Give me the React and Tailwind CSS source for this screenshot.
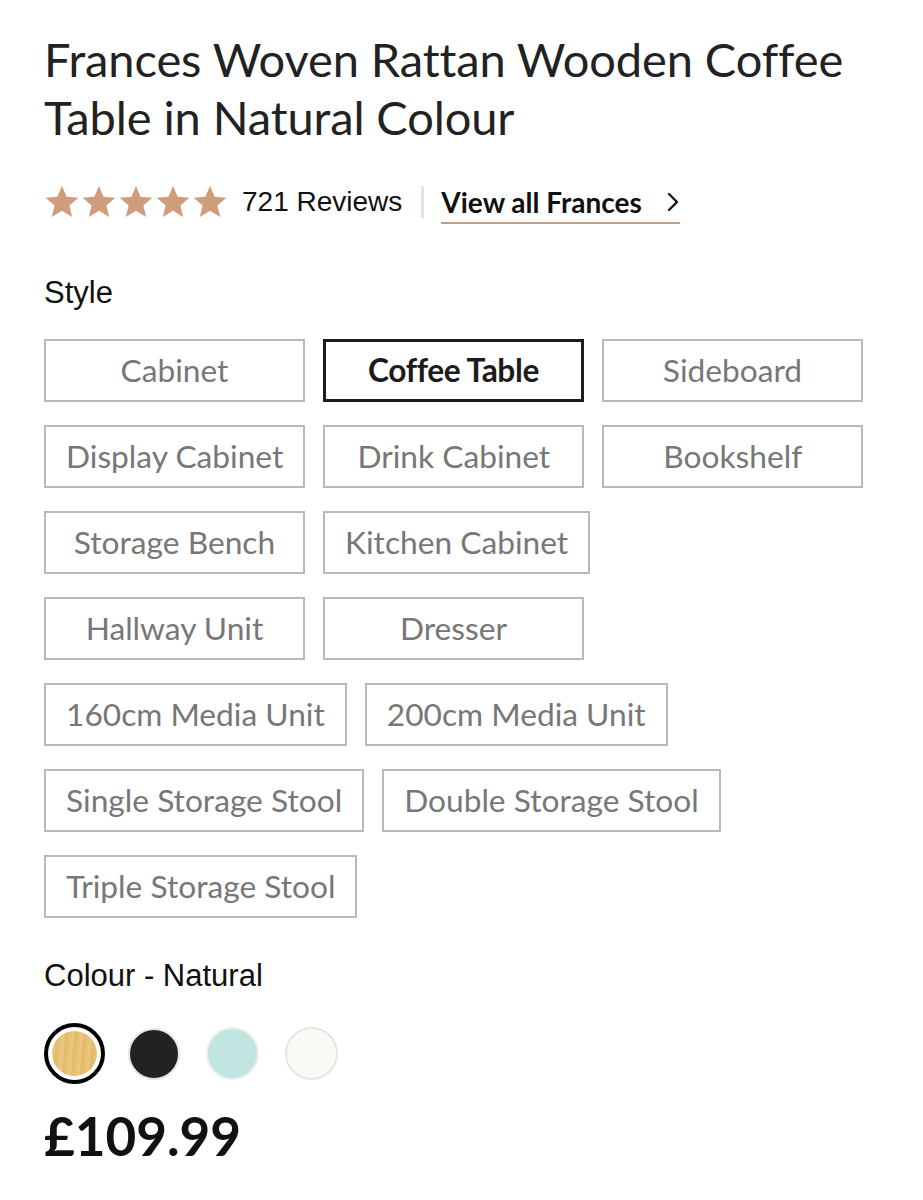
import React from "react";

const styles = [
  ["Cabinet", "Coffee Table", "Sideboard"],
  ["Display Cabinet", "Drink Cabinet", "Bookshelf"],
  ["Storage Bench", "Kitchen Cabinet"],
  ["Hallway Unit", "Dresser"],
  ["160cm Media Unit", "200cm Media Unit"],
  ["Single Storage Stool", "Double Storage Stool"],
  ["Triple Storage Stool"],
];

function Star() {
  return (
    <svg width="36" height="34" viewBox="0 0 24 23" className="shrink-0">
      <path
        d="M12 0.6l3.1 7.4 8 0.6-6.1 5.2 1.9 7.8L12 17.4l-6.9 4.2 1.9-7.8L0.9 8.6l8-0.6z"
        fill="#d09d7c"
      />
    </svg>
  );
}

export default function App() {
  return (
    <div className="bg-white w-[923px] min-h-[1200px] pl-[44px] pr-[20px] pt-[30px] text-[#222]">
      <h1 className="font-[Lato,'Noto_Sans',sans-serif] text-[47px] leading-[58px] font-normal text-[#222] tracking-[-0.1px]">
        Frances Woven Rattan Wooden Coffee Table in Natural Colour
      </h1>

      <div className="flex items-center mt-[38px] h-[36px]">
        <div className="flex gap-[1px]">
          <Star />
          <Star />
          <Star />
          <Star />
          <Star />
        </div>
        <span className="ml-[14px] font-['Liberation_Sans',Arial,sans-serif] text-[28px] text-[#111]">
          721 Reviews
        </span>
        <div className="ml-[19px] w-[3px] h-[32px] bg-[#e3e3e3]" />
        <div className="ml-[17px] relative flex items-center h-[36px]">
          <span className="font-[Lato,'Noto_Sans',sans-serif] font-bold text-[28px] text-[#111]">
            View all Frances
          </span>
          <svg width="14" height="22" viewBox="0 0 14 22" className="ml-[24px]">
            <path d="M3 3l8 8-8 8" fill="none" stroke="#111" strokeWidth="2.4" strokeLinecap="round" strokeLinejoin="round" />
          </svg>
          <div className="absolute left-0 right-0 bottom-[-4px] h-[2px] bg-[#c99b7e]" />
        </div>
      </div>

      <div className="mt-[57px] font-['Liberation_Sans',Arial,sans-serif] text-[31px] leading-[32px] text-[#111]">
        Style
      </div>

      <div className="mt-[30px] flex flex-col gap-[23px]">
        {styles.map((row, i) => (
          <div key={i} className="flex gap-[18px]">
            {row.map((s) => {
              const sel = s === "Coffee Table";
              return (
                <div
                  key={s}
                  className={
                    sel
                      ? "min-w-[261px] h-[63px] px-[20px] flex items-center justify-center border-[3px] border-[#1c1c1c] font-[Lato,'Noto_Sans',sans-serif] font-bold text-[31.7px] text-[#1c1c1c] tracking-[-0.4px]"
                      : "min-w-[261px] h-[63px] px-[20px] flex items-center justify-center border-2 border-[#b9b9b9] font-[Lato,'Noto_Sans',sans-serif] text-[31.7px] text-[#777]"
                  }
                >
                  {s}
                </div>
              );
            })}
          </div>
        ))}
      </div>

      <div className="mt-[42px] font-['Liberation_Sans',Arial,sans-serif] text-[31px] leading-[32px] text-[#111]">
        Colour - Natural
      </div>

      <div className="mt-[31px] flex items-center">
        <div className="w-[61px] h-[61px] rounded-full border-[4px] border-black p-[4px] flex items-center justify-center">
          <div className="w-full h-full rounded-full bg-[repeating-linear-gradient(95deg,#e6bf72_0px,#ecc97f_3px,#e2b86a_6px,#eac47a_9px)]" />
        </div>
        <div className="ml-[23px] w-[52px] h-[52px] rounded-full bg-[#222] border-2 border-[#e6e6e6]" />
        <div className="ml-[26px] w-[53px] h-[53px] rounded-full bg-[#c1e6e1] border-2 border-[#eeeeee]" />
        <div className="ml-[26px] w-[53px] h-[53px] rounded-full bg-[#fafaf5] border-2 border-[#e6e6e6]" />
      </div>

      <div className="mt-[22px] font-[Lato,'Noto_Sans',sans-serif] font-bold text-[53px] leading-[60px] text-[#111]">
        £109.99
      </div>
    </div>
  );
}
